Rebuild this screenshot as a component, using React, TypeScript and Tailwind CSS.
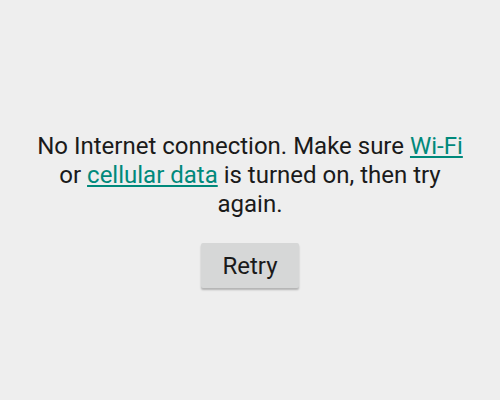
export default function App() {
  return (
    <div className="w-[500px] h-[400px] bg-[#eeeeee] flex flex-col items-center pt-[132px]" style={{ fontFamily: 'Roboto, sans-serif' }}>
      <p className="text-[24px] leading-[29px] text-[#1a1a1a] text-center w-[460px]">
        No Internet connection. Make sure{' '}
        <span className="text-[#00897b] underline">Wi-Fi</span>
        <br />
        or <span className="text-[#00897b] underline">cellular data</span> is turned on, then try
        <br />
        again.
      </p>
      <button className="mt-[24px] w-[98px] h-[45px] bg-[#d6d7d7] rounded-[2px] text-[24px] text-[#1a1a1a] shadow-[0_2px_2px_rgba(0,0,0,0.25)]">
        Retry
      </button>
    </div>
  );
}
